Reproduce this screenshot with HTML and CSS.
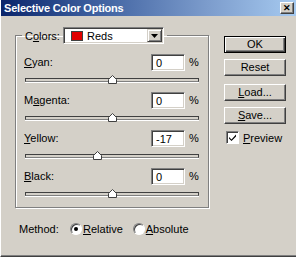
FILE: index.html
```html
<!DOCTYPE html>
<html>
<head>
<meta charset="utf-8">
<link rel="stylesheet" href="styles.css">
</head>
<body>
<div class="win">
  <div class="titlebar">
    <span class="title">Selective Color Options</span>
    <span class="close">&#x2715;</span>
  </div>
  <div class="main">
    <div class="left">
      <fieldset class="group">
        <legend class="legend">
          <span class="lbl">C<u>o</u>lors:</span>
          <span class="select">
            <span class="swatch"></span>
            <span class="seltext">Reds</span>
            <span class="arrow"><svg width="7" height="4" viewBox="0 0 7 4"><path d="M0 0h7L3.5 4z" fill="#000"/></svg></span>
          </span>
        </legend>
        <div class="block">
          <div class="row"><span class="name"><u>C</u>yan:</span><span class="field">0</span><span class="pct">%</span></div>
          <div class="track"><span class="thumb" style="left:50%"><svg width="9" height="9" viewBox="0 0 9 9"><path d="M0.5 8.5V4.5L4.5 0.5L8.5 4.5V8.5Z" fill="#fff" stroke="#404040"/></svg></span></div>
        </div>
        <div class="block">
          <div class="row"><span class="name">M<u>a</u>genta:</span><span class="field">0</span><span class="pct">%</span></div>
          <div class="track"><span class="thumb" style="left:50%"><svg width="9" height="9" viewBox="0 0 9 9"><path d="M0.5 8.5V4.5L4.5 0.5L8.5 4.5V8.5Z" fill="#fff" stroke="#404040"/></svg></span></div>
        </div>
        <div class="block">
          <div class="row"><span class="name"><u>Y</u>ellow:</span><span class="field">-17</span><span class="pct">%</span></div>
          <div class="track"><span class="thumb" style="left:41.5%"><svg width="9" height="9" viewBox="0 0 9 9"><path d="M0.5 8.5V4.5L4.5 0.5L8.5 4.5V8.5Z" fill="#fff" stroke="#404040"/></svg></span></div>
        </div>
        <div class="block">
          <div class="row"><span class="name"><u>B</u>lack:</span><span class="field">0</span><span class="pct">%</span></div>
          <div class="track"><span class="thumb" style="left:50%"><svg width="9" height="9" viewBox="0 0 9 9"><path d="M0.5 8.5V4.5L4.5 0.5L8.5 4.5V8.5Z" fill="#fff" stroke="#404040"/></svg></span></div>
        </div>
      </fieldset>
      <div class="method">
        <span class="mlabel">Method:</span>
        <span class="radio on"></span><span class="rtext"><u>R</u>elative</span>
        <span class="radio"></span><span class="rtext"><u>A</u>bsolute</span>
      </div>
    </div>
    <div class="right">
      <div class="btn default">OK</div>
      <div class="btn">Reset</div>
      <div class="btn gap"><u>L</u>oad...</div>
      <div class="btn"><u>S</u>ave...</div>
      <div class="check">
        <span class="box"><svg width="9" height="9" viewBox="0 0 9 9"><path d="M1 4l2.5 2.5L8 1.5V3.5L3.5 8L1 5.5z" fill="#000"/></svg></span>
        <span class="ctext"><u>P</u>review</span>
      </div>
    </div>
  </div>
</div>
</body>
</html>
```

FILE: styles.css
```css
html, body {
  margin: 0;
  padding: 0;
  background: #d4d0c8;
}
body {
  font: 11px "Liberation Sans", Arial, sans-serif;
  color: #000;
}
u { text-decoration: underline; text-underline-offset: 1px; }

.win {
  width: 296px;
  height: 257px;
  box-sizing: border-box;
  background: #d4d0c8;
  border-left: 1px solid #fff;
  border-bottom: 1px solid #404040;
  box-shadow: inset 0 -1px #808080;
  overflow: hidden;
}

.titlebar {
  height: 16px;
  margin-left: -1px;
  background: linear-gradient(to right, #0a246a 0%, #3a5c9c 30%, #7c9ccc 70%, #a6caf0 100%);
  display: flex;
  align-items: center;
  justify-content: space-between;
  padding: 0 2px 0 4px;
}
.title {
  color: #fff;
  font-weight: bold;
  font-size: 11px;
  letter-spacing: -0.2px;
}
.close {
  width: 14px;
  height: 12px;
  box-sizing: border-box;
  background: #d4d0c8;
  border: 1px solid;
  border-color: #fff #404040 #404040 #fff;
  box-shadow: inset -1px -1px #808080;
  font-size: 9px;
  font-weight: bold;
  line-height: 10px;
  text-align: center;
}

.main {
  display: flex;
  padding-top: 11px;
}
.left {
  margin-left: 14px;
  width: 194px;
}
.group {
  margin: 0;
  padding: 0 9px 11px 8px;
  border: 1px solid #808080;
  box-shadow: 1px 1px 0 #fff, inset 1px 1px 0 #fff;
  width: 194px;
  box-sizing: border-box;
}
.legend {
  margin-left: -2px;
  padding: 0 3px;
  display: flex;
  align-items: center;
  height: 17px;
}
.lbl {
  width: 38px;
}
.select {
  width: 101px;
  height: 17px;
  box-sizing: border-box;
  background: #fff;
  border: 1px solid;
  border-color: #808080 #fff #fff #808080;
  box-shadow: inset 1px 1px #404040, inset -1px -1px #d4d0c8;
  display: flex;
  align-items: center;
  padding-left: 7px;
  position: relative;
}
.swatch {
  width: 12px;
  height: 10px;
  background: #e00000;
  border: 1px solid #404040;
  box-sizing: border-box;
  margin-right: 4px;
}
.seltext { flex: 1; }
.arrow {
  width: 15px;
  height: 13px;
  box-sizing: border-box;
  margin-right: 1px;
  background: #d4d0c8;
  border: 1px solid;
  border-color: #d4d0c8 #404040 #404040 #d4d0c8;
  box-shadow: inset 1px 1px #fff, inset -1px -1px #808080;
  display: flex;
  align-items: center;
  justify-content: center;
}

.block { padding-top: 10px; }
.row {
  display: flex;
  align-items: center;
  height: 16px;
  padding-right: 1px;
}
.name { flex: 1; }
.field {
  width: 34px;
  height: 17px;
  box-sizing: border-box;
  background: #fff;
  border: 1px solid;
  border-color: #808080 #fff #fff #808080;
  box-shadow: inset 1px 1px #404040, inset -1px -1px #d4d0c8;
  padding: 2px 0 0 4px;
  line-height: 12px;
}
.pct { margin-left: 4px; width: 9px; }
.track {
  position: relative;
  margin-top: 8px;
  margin-left: 1px;
  height: 4px;
  box-sizing: border-box;
  border: 1px solid #404040;
  border-bottom-color: #808080;
  background: #d4d0c8;
  box-shadow: 0 1px #fff;
}
.thumb {
  position: absolute;
  top: -4px;
  width: 9px;
  height: 9px;
  margin-left: -4px;
}
.thumb svg { display: block; }

.method {
  display: flex;
  align-items: center;
  margin-top: 14px;
  padding-left: 4px;
  height: 13px;
}
.mlabel { width: 51px; }
.radio {
  width: 12px;
  height: 12px;
  box-sizing: border-box;
  border-radius: 50%;
  background: #fff;
  border: 1px solid;
  border-color: #808080 #fff #fff #808080;
  box-shadow: inset 1px 1px #404040;
  position: relative;
  margin-right: 1px;
}
.radio.on::after {
  content: "";
  position: absolute;
  left: 3px;
  top: 3px;
  width: 4px;
  height: 4px;
  border-radius: 50%;
  background: #000;
}
.rtext { margin-right: 10px; }

.right {
  margin-left: 15px;
  padding-top: 9px;
  width: 62px;
}
.btn {
  width: 62px;
  height: 17px;
  box-sizing: border-box;
  background: #d4d0c8;
  border: 1px solid;
  border-color: #fff #404040 #404040 #fff;
  box-shadow: inset -1px -1px #808080;
  text-align: center;
  line-height: 15px;
  margin-bottom: 6px;
}
.btn.default {
  border: 1px solid #000;
  box-shadow: inset 1px 1px #fff, inset -1px -1px #404040, inset -2px -2px #808080;
}
.btn.gap { margin-top: 8px; }
.check {
  display: flex;
  align-items: center;
  margin-top: 7px;
  padding-left: 2px;
}
.box {
  width: 13px;
  height: 13px;
  box-sizing: border-box;
  background: #fff;
  border: 1px solid;
  border-color: #808080 #fff #fff #808080;
  box-shadow: inset 1px 1px #404040;
  display: flex;
  align-items: center;
  justify-content: center;
  margin-right: 4px;
}
.box svg { display: block; }
```
